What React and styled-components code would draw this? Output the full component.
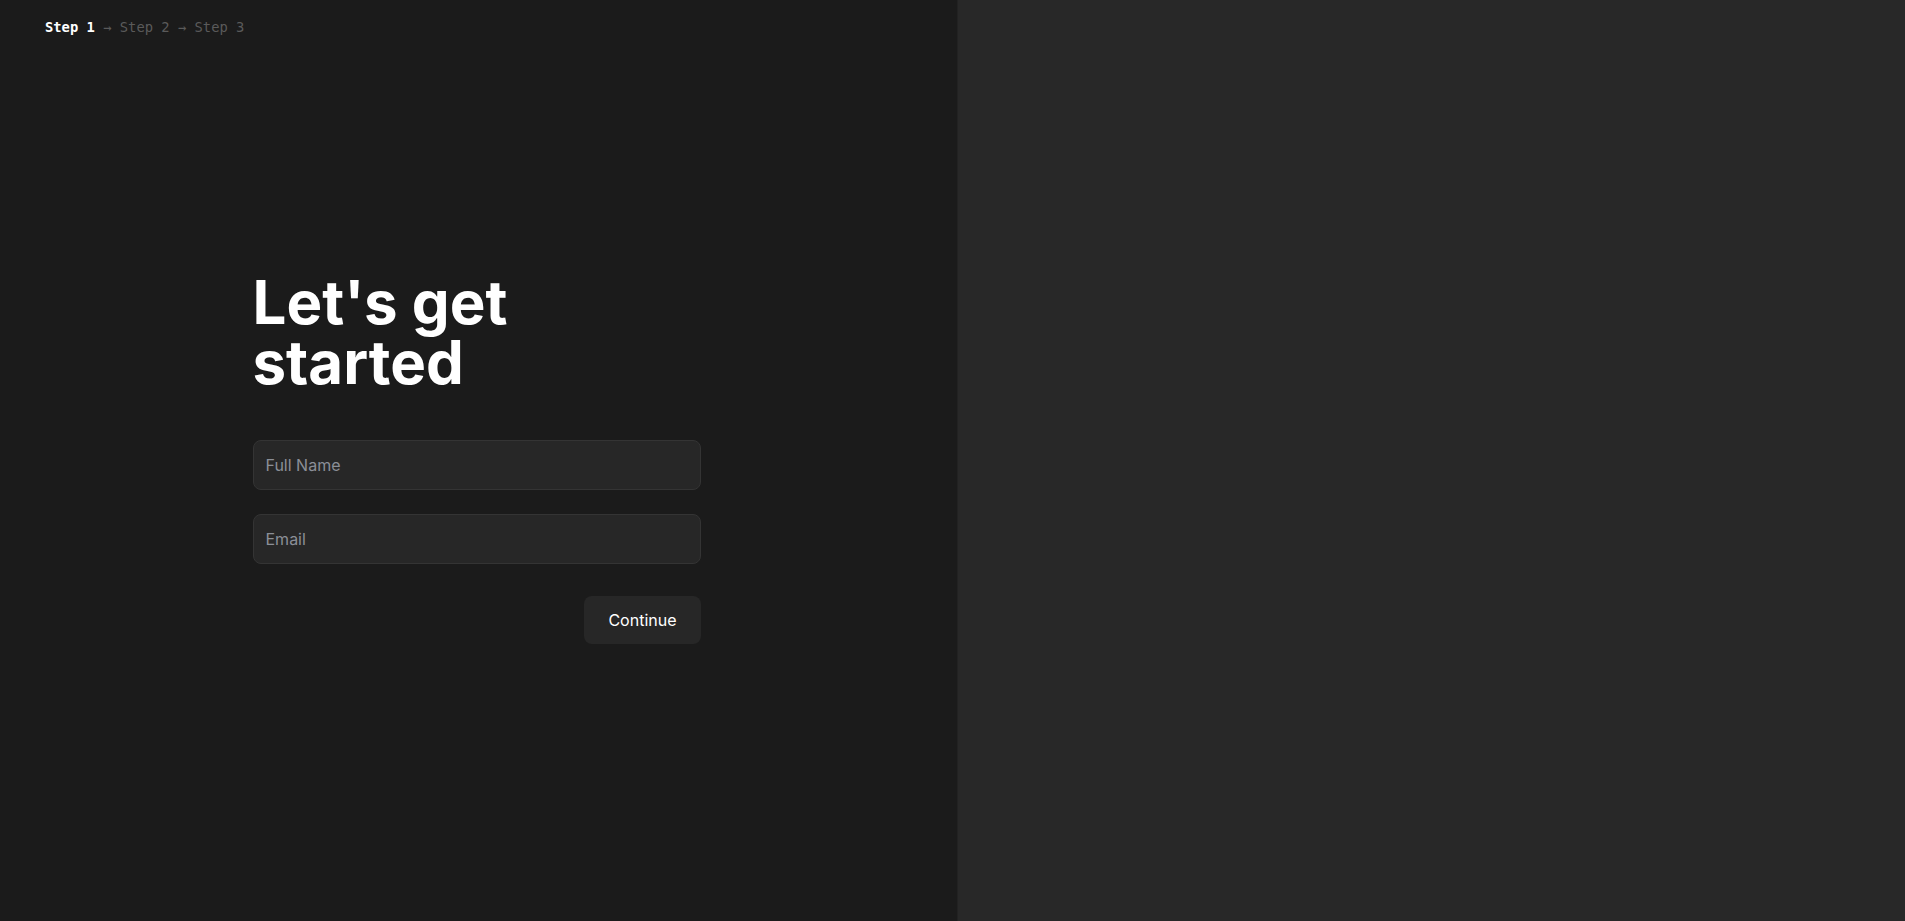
import React from 'react';
import styled, { createGlobalStyle } from 'styled-components';

const GlobalStyle = createGlobalStyle`
  html, body {
    margin: 0;
    padding: 0;
    height: 100%;
    background: #1b1b1b;
  }
  #root {
    height: 100%;
  }
  * {
    box-sizing: border-box;
  }
`;

const steps = ['Step 1', 'Step 2', 'Step 3'];

const App = () => {
  return (
    <>
      <GlobalStyle />
      <Page>
        <FormPanel>
          <StepBar>
            {steps.map((step, i) => (
              <React.Fragment key={step}>
                {i > 0 && <Arrow>{' → '}</Arrow>}
                <StepLabel $active={i === 0}>{step}</StepLabel>
              </React.Fragment>
            ))}
          </StepBar>
          <FormArea>
            <Form onSubmit={(e) => e.preventDefault()}>
              <Title>Let's get started</Title>
              <Fields>
                <Input type="text" placeholder="Full Name" />
                <Input type="email" placeholder="Email" />
              </Fields>
              <Actions>
                <Button type="submit">Continue</Button>
              </Actions>
            </Form>
          </FormArea>
        </FormPanel>
        <SidePanel />
      </Page>
    </>
  );
};
export default App;

const Page = styled.div`
  display: flex;
  width: 100%;
  height: 100vh;
  min-height: 921px;
`;

const FormPanel = styled.section`
  width: 957px;
  flex-shrink: 0;
  display: grid;
  grid-template-rows: 54px 1fr 60px;
  background: #1b1b1b;
`;

const SidePanel = styled.section`
  flex: 1;
  background: #282828;
  border-left: 1px solid #222222;
`;

const StepBar = styled.nav`
  display: flex;
  align-items: center;
  padding: 0 45px;
  font-family: 'DejaVu Sans Mono', 'Liberation Mono', monospace;
  font-size: 13.8px;
  white-space: pre;
`;

const StepLabel = styled.span`
  color: ${({ $active }) => ($active ? '#ffffff' : '#5a5a5a')};
  font-weight: ${({ $active }) => ($active ? 700 : 400)};
`;

const Arrow = styled.span`
  color: #5a5a5a;
`;

const FormArea = styled.div`
  display: flex;
  align-items: center;
  justify-content: center;
  padding-right: 4px;
`;

const Form = styled.form`
  width: 448px;
  display: flex;
  flex-direction: column;
  font-family: Inter, 'Noto Sans', sans-serif;
`;

const Title = styled.h1`
  margin: 0 0 48px;
  width: 300px;
  font-size: 60px;
  line-height: 60px;
  font-weight: 700;
  color: #ffffff;
`;

const Fields = styled.div`
  display: flex;
  flex-direction: column;
  gap: 24px;
`;

const Input = styled.input`
  height: 50px;
  padding: 0 12px;
  background: #272727;
  border: 1px solid #343434;
  border-radius: 8px;
  color: #ffffff;
  font-family: inherit;
  font-size: 16px;
  outline: none;

  &::placeholder {
    color: #8b8f97;
  }
`;

const Actions = styled.div`
  display: flex;
  justify-content: flex-end;
  margin-top: 32px;
`;

const Button = styled.button`
  height: 48px;
  padding: 0 24px;
  background: #272727;
  border: none;
  border-radius: 8px;
  color: #ffffff;
  font-family: inherit;
  font-size: 16px;
  font-weight: 400;
  cursor: pointer;
`;
